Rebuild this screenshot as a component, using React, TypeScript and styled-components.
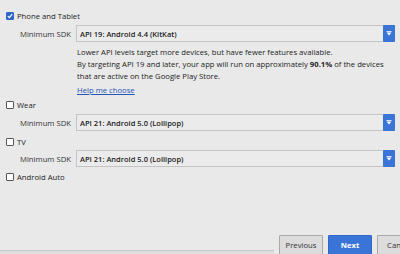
import React from 'react';
import styled, { createGlobalStyle } from 'styled-components';

const GlobalStyle = createGlobalStyle`
  html, body {
    margin: 0;
    padding: 0;
    background: #e9e9e9;
  }
`;

const Page = styled.div`
  width: 400px;
  height: 254px;
  overflow: hidden;
  background: #e9e9e9;
  font-family: 'Open Sans', 'Noto Sans', sans-serif;
  font-size: 7.7px;
  color: #222;
  display: flex;
  flex-direction: column;
`;

const Form = styled.div`
  display: flex;
  flex-direction: column;
  padding: 10px 5px 0 6px;
  flex: 1;
`;

const CheckRow = styled.label<{ $top?: number }>`
  display: flex;
  align-items: center;
  gap: 3px;
  height: 12px;
  margin-top: ${(p) => p.$top ?? 0}px;
`;

const Box = styled.span<{ $checked?: boolean }>`
  width: 8px;
  height: 8px;
  box-sizing: border-box;
  border: 1px solid ${(p) => (p.$checked ? '#2f66c9' : '#555')};
  background: ${(p) => (p.$checked ? '#2f66c9' : '#fff')};
  border-radius: 1px;
  display: flex;
  align-items: center;
  justify-content: center;
`;

const SdkRow = styled.div<{ $top?: number }>`
  display: flex;
  align-items: center;
  margin-top: ${(p) => p.$top ?? 0}px;
  padding-left: 14px;
`;

const SdkLabel = styled.span`
  width: 56px;
  color: #333;
`;

const Select = styled.div`
  flex: 1;
  height: 17px;
  box-sizing: border-box;
  border: 1px solid #c4c4c4;
  background: #ebebeb;
  display: flex;
  align-items: center;
  padding-left: 3px;
  font-size: 7.5px;
  font-weight: 600;
  color: #222;
`;

const SelectText = styled.span`
  flex: 1;
`;

const DropButton = styled.span`
  width: 12px;
  height: 17px;
  margin-right: -1px;
  background: #3a74d6;
  border-radius: 1px;
  display: flex;
  align-items: center;
  justify-content: center;
`;

const Notes = styled.div`
  padding-left: 71px;
  margin-top: 4px;
  line-height: 12px;
  white-space: nowrap;
  color: #222;
`;

const Para = styled.p`
  margin: 0;
`;

const HelpLink = styled.a`
  display: block;
  margin-top: 2px;
  color: #2456b8;
  text-decoration: underline;
`;

const Footer = styled.div`
  display: flex;
  align-items: flex-start;
  height: 19px;
  gap: 5px;
  margin-right: -21px;
`;

const Rule = styled.div`
  flex: 1;
  align-self: flex-end;
  height: 3px;
  border-top: 1px solid #c9c9c9;
  background: #dedede;
`;

const Button = styled.button<{ $primary?: boolean }>`
  width: 44px;
  height: 20px;
  padding: 0;
  font-family: inherit;
  font-size: 7.7px;
  font-weight: ${(p) => (p.$primary ? 700 : 400)};
  color: ${(p) => (p.$primary ? '#fff' : '#333')};
  background: ${(p) => (p.$primary ? '#3a74d6' : '#dcdcdc')};
  border: 1px solid ${(p) => (p.$primary ? '#2f66c9' : '#a9a9a9')};
  border-radius: 1px;
  flex-shrink: 0;
`;

const Check = () => (
  <svg width="6" height="6" viewBox="0 0 6 6">
    <path d="M0.8 3.1 L2.4 4.6 L5.2 1.2" fill="none" stroke="#fff" strokeWidth="1.2" />
  </svg>
);

const Arrow = () => (
  <svg width="6" height="5" viewBox="0 0 6 5">
    <rect x="0.5" y="0" width="5" height="0.8" fill="#fff" />
    <path d="M0.5 1.6 H5.5 L3 4.4 Z" fill="#fff" />
  </svg>
);

const Sdk = ({ value, top }: { value: string; top: number }) => (
  <SdkRow $top={top}>
    <SdkLabel>Minimum SDK</SdkLabel>
    <Select>
      <SelectText>{value}</SelectText>
      <DropButton>
        <Arrow />
      </DropButton>
    </Select>
  </SdkRow>
);

const App = () => (
  <Page>
    <GlobalStyle />
    <Form>
      <CheckRow>
        <Box $checked>
          <Check />
        </Box>
        Phone and Tablet
      </CheckRow>
      <Sdk value="API 19: Android 4.4 (KitKat)" top={3} />
      <Notes>
        <Para>Lower API levels target more devices, but have fewer features available.</Para>
        <Para>
          By targeting API 19 and later, your app will run on approximately <b>90.1%</b> of the devices
        </Para>
        <Para>that are active on the Google Play Store.</Para>
        <HelpLink>Help me choose</HelpLink>
      </Notes>
      <CheckRow $top={3}>
        <Box />
        Wear
      </CheckRow>
      <Sdk value="API 21: Android 5.0 (Lollipop)" top={3} />
      <CheckRow $top={5}>
        <Box />
        TV
      </CheckRow>
      <Sdk value="API 21: Android 5.0 (Lollipop)" top={2} />
      <CheckRow $top={4}>
        <Box />
        Android Auto
      </CheckRow>
    </Form>
    <Footer>
      <Rule />
      <Button>Previous</Button>
      <Button $primary>Next</Button>
      <Button>Cancel</Button>
    </Footer>
  </Page>
);

export default App;
